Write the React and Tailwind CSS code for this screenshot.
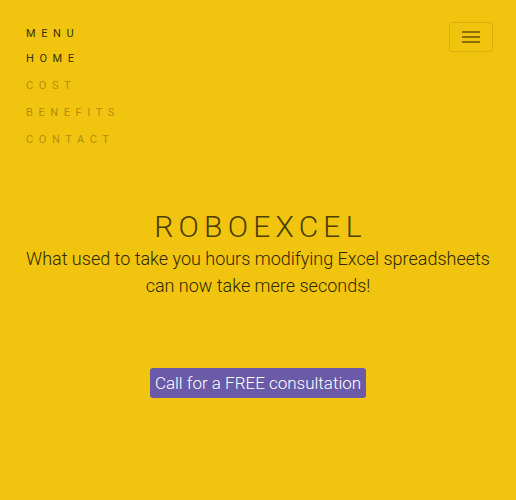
import React from 'react';

const links = ['HOME', 'COST', 'BENEFITS', 'CONTACT'];

const App = () => {
  return (
    <div className="w-full h-[500px] bg-[#f1c40f] font-['Roboto',sans-serif] text-[#333]">
      <nav className="flex justify-between pl-[26px] pr-[23px] pt-[22px]">
        <div>
          <div className="text-[11px] tracking-[5.6px] leading-[22px] pt-[1px] text-[#3a3200]">MENU</div>
          <ul className="mt-[2px]">
            {links.map((item, i) => (
              <li
                key={item}
                className={`text-[11px] tracking-[5.6px] leading-[27px] ${i === 0 ? 'text-[#3a3200] -mt-[2px]' : 'text-[#b38f0c]'}`}
              >
                {item}
              </li>
            ))}
          </ul>
        </div>
        <button className="w-[44px] h-[30px] border border-[#d9ad0d] rounded-[3px] flex flex-col items-center justify-center gap-[3px]">
          <span className="block w-[18px] h-[2px] bg-[#8a6f06]" />
          <span className="block w-[18px] h-[2px] bg-[#8a6f06]" />
          <span className="block w-[18px] h-[2px] bg-[#8a6f06]" />
        </button>
      </nav>

      <section className="flex flex-col items-center text-center mt-[56px]">
        <h1 className="text-[30px] font-light tracking-[5.2px] leading-[36px] text-[#4a3f00] pl-[5px]">ROBOEXCEL</h1>
        <p className="text-[18px] font-light leading-[27px] text-[#2e2800] w-full px-[20px]">
          What used to take you hours modifying Excel spreadsheets can now take mere seconds!
        </p>
        <button className="mt-[69px] bg-[#6a5aa8] text-white text-[17px] font-light leading-[22px] px-[5px] py-[4px] rounded-[3px]">
          Call for a FREE consultation
        </button>
      </section>
    </div>
  );
};

export default App;
